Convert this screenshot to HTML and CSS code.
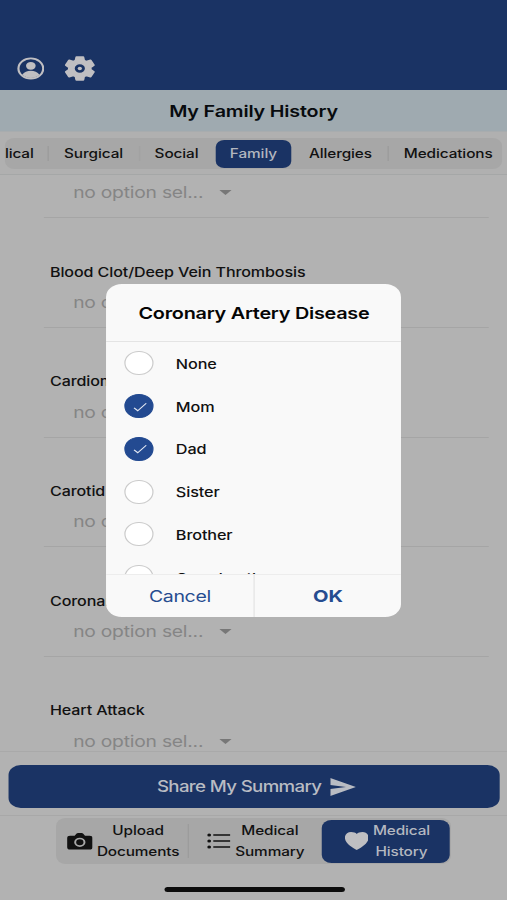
FILE: index.html
```html
<!DOCTYPE html>
<html lang="en">
<head>
<meta charset="utf-8">
<title>My Family History</title>
<link rel="stylesheet" href="styles.css">
</head>
<body>
<div class="app">
  <header class="toolbar">
    <svg class="ic-person" viewBox="0 0 24 24"><circle cx="12" cy="12" r="10.8" fill="none" stroke="currentColor" stroke-width="1.9"/><circle cx="12" cy="9.2" r="4.2"/><path d="M4.500 18.700C6 15.500 9 14.400 12 14.400s6 1.100 7.500 4.300C17.500 20.900 15 22 12 22s-5.500-1.100-7.500-3.300z"/></svg>
    <svg class="ic-gear" viewBox="0 0 24 24"><path fill-rule="evenodd" stroke="currentColor" stroke-width="1.600" stroke-linejoin="round" d="M9.300 1h5.400l.6 3.300 1.900 1.100 3.300-1.200 2.500 4.500-2.500 2.200v2.200l2.500 2.200-2.500 4.500-3.300-1.200-1.900 1.100-.6 3.300H9.300l-.6-3.300-1.900-1.100-3.300 1.200L1 15.300l2.500-2.200v-2.200L1 8.700l2.500-4.500 3.300 1.200 1.900-1.100zM12 7.200a4.800 4.800 0 1 0 0 9.600 4.800 4.800 0 0 0 0-9.600z"/><circle cx="12" cy="12" r="1.700"/></svg>
  </header>
  <h1 class="title">My Family History</h1>
  <nav class="tabs">
    <div class="seg">
      <span class="tab t-medical">lical</span>
      <span class="tab t-surgical">Surgical</span>
      <span class="tab t-social">Social</span>
      <span class="tab t-family">Family</span>
      <span class="tab t-allergies">Allergies</span>
      <span class="tab t-meds">Medications</span>
    </div>
  </nav>
  <main class="list">
    <section class="item first"><div class="select">no option sel...<i class="caret"></i></div></section>
    <section class="item"><div class="label">Blood Clot/Deep Vein Thrombosis</div><div class="select">no option sel...<i class="caret"></i></div></section>
    <section class="item"><div class="label">Cardiomyopathy</div><div class="select">no option sel...<i class="caret"></i></div></section>
    <section class="item"><div class="label">Carotid Disease</div><div class="select">no option sel...<i class="caret"></i></div></section>
    <section class="item"><div class="label">Coronary Artery Disease</div><div class="select">no option sel...<i class="caret"></i></div></section>
    <section class="item"><div class="label">Heart Attack</div><div class="select">no option sel...<i class="caret"></i></div></section>
  </main>
  <div class="share-bar">
    <button class="share"><span>Share My Summary</span><svg class="ic-send" viewBox="0 0 22 20" preserveAspectRatio="none"><path d="M0 0l22 10L0 20v-7.800L13.500 10 0 7.800z"/></svg></button>
  </div>
  <footer class="bottom">
    <div class="bseg">
      <div class="btab upload"><svg class="ic-cam" viewBox="0 0 22 18"><path fill-rule="evenodd" d="M2.500 3h4L8 .8Q8.500 0 9.500 0h3q1 0 1.500.8L15.500 3h4Q22 3 22 5.500v9.500q0 2.500-2.500 2.500h-17Q0 17.500 0 15V5.500Q0 3 2.500 3zM11 5a4.900 4.900 0 1 0 0 9.800A4.900 4.900 0 0 0 11 5zm0 1.700a3.200 3.200 0 1 1 0 6.400 3.200 3.200 0 0 1 0-6.400z"/></svg><span>Upload<br>Documents</span></div>
      <div class="btab summary"><svg class="ic-list" viewBox="0 0 19 16"><circle cx="1.600" cy="2" r="1.600"/><circle cx="1.600" cy="8" r="1.600"/><circle cx="1.600" cy="14" r="1.600"/><path d="M5 2h14M5 8h14M5 14h14" stroke="currentColor" stroke-width="1.600"/></svg><span>Medical<br>Summary</span></div>
      <div class="btab history"><svg class="ic-heart" viewBox="0 0 20 18" preserveAspectRatio="none"><path d="M10 18C7 16 0 11.500 0 5.600 0 2.400 2.300 0 5.200 0 7.400 0 9 .7 10 1.900 11 .7 12.600 0 14.800 0 17.700 0 20 2.400 20 5.600 20 11.500 13 16 10 18z"/></svg><span>Medical<br>History</span></div>
    </div>
    <div class="home"></div>
  </footer>
  <div class="modal" role="dialog">
    <h2 class="m-title">Coronary Artery Disease</h2>
    <div class="options">
      <div class="opt"><i class="check"></i><span>None</span></div>
      <div class="opt"><i class="check on"><svg viewBox="0 0 14 12"><path d="M1 7l3.600 3.500L13 1.500"/></svg></i><span>Mom</span></div>
      <div class="opt"><i class="check on"><svg viewBox="0 0 14 12"><path d="M1 7l3.600 3.500L13 1.500"/></svg></i><span>Dad</span></div>
      <div class="opt"><i class="check"></i><span>Sister</span></div>
      <div class="opt"><i class="check"></i><span>Brother</span></div>
      <div class="opt"><i class="check"></i><span>Grandmother</span></div>
    </div>
    <div class="actions"><button class="cancel">Cancel</button><button class="ok">OK</button></div>
  </div>
</div>
</body>
</html>
```
FILE: styles.css
```css
* { box-sizing: border-box; margin: 0; padding: 0; }
html, body { width: 507px; height: 900px; overflow: hidden; background: #b2b2b2; }
body { font-family: Inter, "Liberation Sans", sans-serif; color: #111; }
button { font: inherit; letter-spacing: inherit; color: inherit; border: 0; background: none; }
svg { display: block; fill: currentColor; flex: none; }

/* The interface is laid out 416px wide and widened to fill the window. */
.app {
  position: relative;
  width: 416px;
  height: 900px;
  transform: scaleX(1.21875);
  transform-origin: 0 0;
  display: flex;
  flex-direction: column;
  background: #b2b2b2;
}
.toolbar {
  height: 90px;
  background: #1a3364;
  color: #c0bfc2;
  display: flex;
  align-items: center;
  gap: 17px;
  padding: 46px 0 0 13.500px;
}
.ic-person { width: 22.600px; height: 23px; }
.ic-gear { width: 25px; height: 25px; }
.title {
  height: 42px;
  background: #9faab0;
  border-bottom: 1px solid #a8acae;
  color: #080b0e;
  font-size: 16.200px;
  font-weight: 600;
  letter-spacing: -0.140px;
  line-height: 42px;
  text-align: center;
  white-space: nowrap;
}
.tabs { height: 43px; padding: 6px 4px 0; background: #b0b0b0; border-bottom: 1px solid #a5a7a7; }
.seg { display: flex; align-items: center; height: 31px; border-radius: 8px; background: #a7a7a7; }
.tab {
  display: flex;
  align-items: center;
  justify-content: center;
  height: 15px;
  padding-bottom: 1px;
  font-size: 12.600px;
  font-weight: 500;
  letter-spacing: -0.080px;
  white-space: nowrap;
}
.t-medical { width: 36px; justify-content: flex-start; border-right: 1px solid #9b9b9b; }
.t-surgical { width: 74.500px; border-right: 1px solid #a2a2a2; }
.t-social { width: 62.700px; padding-right: 2px; }
.t-family { width: 61.500px; height: 28px; border-radius: 7px; background: #1a3364; color: #b2b6bf; }
.t-allergies { width: 80.300px; border-right: 1px solid #9b9b9b; padding-left: 2px; }
.t-meds { flex: 1; padding-left: 4.500px; }

.list { height: 576px; overflow: hidden; padding: 0 15.500px 0 36px; }
.item { height: 109.600px; padding-top: 44.400px; border-bottom: 1px solid #a5a5a5; }
.item.first { height: 43.400px; padding-top: 7.500px; }
.label { height: 18px; line-height: 18px; padding-left: 5px; font-size: 13.200px; font-weight: 500; letter-spacing: -0.090px; white-space: nowrap; }
.select {
  display: flex;
  align-items: center;
  height: 20px;
  padding-left: 24px;
  font-size: 15.800px;
  letter-spacing: -0.180px;
  color: #858585;
  white-space: nowrap;
}
.label + .select { margin-top: 12px; }
.caret {
  margin-left: 13px;
  border: 5px solid transparent;
  border-top: 5px solid #777;
  border-bottom: 0;
}

.share-bar { height: 65px; border-top: 1px solid #a9a9a9; border-bottom: 1px solid #a8a8a8; padding: 13px 6px 0 6.500px; }
.share {
  width: 100%;
  height: 43px;
  border-radius: 10px;
  background: #1a3364;
  color: #b9bcc3;
  display: flex;
  align-items: center;
  justify-content: center;
  gap: 7px;
  padding-left: 4px;
  font-size: 15.300px;
  font-weight: 500;
  letter-spacing: -0.520px;
}
.ic-send { width: 21px; height: 18px; }
.bottom { flex: 1; padding-top: 2px; }
.bseg {
  display: flex;
  align-items: center;
  width: 324px;
  height: 46px;
  margin-left: 46px;
  border-radius: 8px;
  background: #a7a7a7;
}
.btab { display: flex; align-items: center; font-size: 12.600px; font-weight: 500; letter-spacing: -0.100px; line-height: 21px; text-align: center; white-space: nowrap; }
.btab span { margin-top: -1px; }
.upload { width: 109px; height: 34px; padding-left: 9px; gap: 3.500px; border-right: 1px solid #9b9b9b; }
.summary { width: 109px; padding-left: 15px; gap: 4px; }
.history { width: 105px; height: 43px; border-radius: 8px; padding-left: 18.500px; gap: 4px; background: #1a3364; color: #b4b8c0; }
.ic-cam { width: 21px; height: 17px; }
.ic-list { width: 19px; height: 16px; }
.ic-heart { width: 19.500px; height: 18px; color: #bfbfc2; }
.home { width: 148px; height: 5px; margin: 23px 0 0 134.500px; border-radius: 3px; background: #0c0c0c; }

.modal {
  position: absolute;
  left: 87.300px;
  top: 284px;
  width: 242.200px;
  height: 333px;
  border-radius: 13px;
  background: #f9f9f9;
  overflow: hidden;
  display: flex;
  flex-direction: column;
}
.m-title { height: 58px; border-bottom: 1px solid #e4e4e4; font-size: 16.300px; font-weight: 600; letter-spacing: -0.220px; line-height: 59px; text-align: center; color: #050505; white-space: nowrap; }
.options { height: 232px; overflow: hidden; }
.opt { display: flex; align-items: center; height: 42.750px; gap: 18.500px; padding-left: 15px; font-size: 13.300px; font-weight: 500; letter-spacing: -0.100px; }
.opt span { padding-top: 1px; }
.check { width: 23.500px; height: 24px; border: 1px solid #cbcbcb; border-radius: 50%; background: #fff; display: flex; align-items: center; justify-content: center; }
.check.on { border-color: #234a91; background: #234a91; }
.check svg { width: 12px; height: 10px; margin: 1px 0 0 1px; fill: none; stroke: #e4e9f3; stroke-width: 1.300; }
.actions { flex: 1; display: flex; border-top: 1px solid #ededed; color: #264c90; font-size: 16.500px; }
.actions button { flex: 1; padding-bottom: 1px; }
.actions .cancel { border-right: 1px solid #e4e4e4; font-size: 16px; letter-spacing: -0.300px; }
.ok { font-weight: 700; }
```
